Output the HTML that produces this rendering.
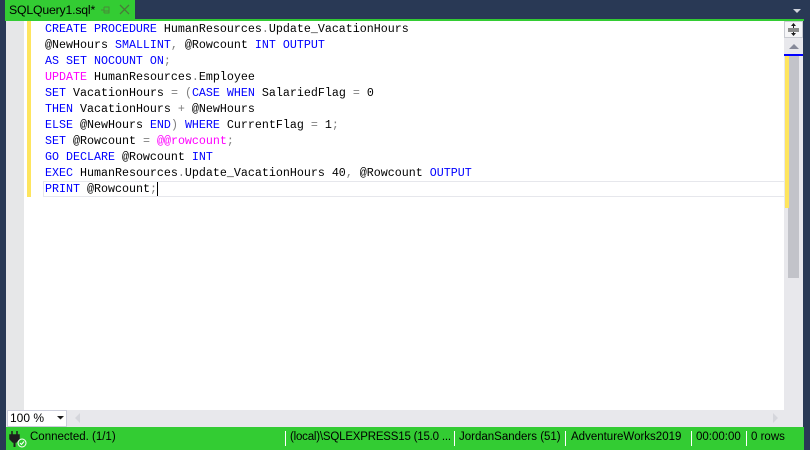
<!DOCTYPE html>
<html><head><style>
*{margin:0;padding:0;box-sizing:border-box}
body{width:810px;height:450px;background:#293955;position:relative;overflow:hidden;font-family:"Liberation Sans",sans-serif}
.abs{position:absolute}
.code{font-family:"Liberation Mono",monospace;font-size:11.67px;line-height:16px;white-space:pre;color:#000}
.k{color:#0000ff}.m{color:#ff00ff}.g{color:#808080}
.sb{font-size:11.5px;color:#000;top:431px;white-space:nowrap;overflow:hidden}
.sep{position:absolute;top:431px;width:1px;height:15px;background:#fff}
</style></head><body>
<div class="abs" style="left:5px;top:0;width:130px;height:21px;background:#33cc33"></div>
<div class="abs" style="left:9px;top:3px;font-size:12.3px;color:#000;letter-spacing:-0.2px">SQLQuery1.sql*</div>
<svg class="abs" style="left:101px;top:6px" width="10" height="9"><path d="M0 4H3M3 1V7M3 1H8V7H3M3 5H8" stroke="#4a8a3a" fill="none"/></svg>
<svg class="abs" style="left:119px;top:4px" width="11" height="11"><path d="M1 1L10 10M10 1L1 10" stroke="#4a7a3a" stroke-width="1.3"/></svg>
<div class="abs" style="left:6px;top:19px;width:798px;height:2px;background:#33cc33"></div>
<svg class="abs" style="left:793px;top:9px" width="8" height="5"><path d="M0 0H8L4 4Z" fill="#d0d4dc"/></svg>
<div class="abs" style="left:6px;top:21px;width:18px;height:389px;background:#e6e7e8"></div>
<div class="abs" style="left:24px;top:21px;width:760px;height:389px;background:#fff"></div>
<div class="abs" style="left:27px;top:21px;width:4px;height:176px;background:#fee55e"></div>
<div class="abs" style="left:43px;top:181px;width:741px;height:16px;border:1px solid #e6e7ec;border-right:none"></div>
<div class="abs code" style="left:45px;top:21px"><span class="k">CREATE PROCEDURE</span> HumanResources<span class="g">.</span>Update_VacationHours
@NewHours <span class="k">SMALLINT</span><span class="g">,</span> @Rowcount <span class="k">INT OUTPUT</span>
<span class="k">AS SET NOCOUNT ON</span><span class="g">;</span>
<span class="m">UPDATE</span> HumanResources<span class="g">.</span>Employee
<span class="k">SET</span> VacationHours <span class="g">=</span> <span class="g">(</span><span class="k">CASE WHEN</span> SalariedFlag <span class="g">=</span> 0
<span class="k">THEN</span> VacationHours <span class="g">+</span> @NewHours
<span class="k">ELSE</span> @NewHours <span class="k">END</span><span class="g">)</span> <span class="k">WHERE</span> CurrentFlag <span class="g">=</span> 1<span class="g">;</span>
<span class="k">SET</span> @Rowcount <span class="g">=</span> <span class="m">@@rowcount</span><span class="g">;</span>
<span class="k">GO DECLARE</span> @Rowcount <span class="k">INT</span>
<span class="k">EXEC</span> HumanResources<span class="g">.</span>Update_VacationHours 40<span class="g">,</span> @Rowcount <span class="k">OUTPUT</span>
<span class="k">PRINT</span> @Rowcount<span class="g">;</span></div>
<div class="abs" style="left:157px;top:182px;width:1px;height:14px;background:#000"></div>
<div class="abs" style="left:784px;top:21px;width:19px;height:406px;background:#e8e8ec"></div>
<div class="abs" style="left:784px;top:21px;width:19px;height:17px;background:#f5f5f7;border:1px solid #c9cbd2"></div>
<svg class="abs" style="left:786px;top:22px" width="15" height="15"><path d="M2 7H13M2 9H13" stroke="#1e1e1e"/><path d="M7.5 1L5 4H10ZM7.5 14L5 11H10Z" fill="#1e1e1e"/><path d="M7.5 3V6M7.5 10V12" stroke="#1e1e1e"/></svg>
<svg class="abs" style="left:788px;top:42px" width="12" height="8"><path d="M1 7H11L6 2Z" fill="#868999"/></svg>
<div class="abs" style="left:784px;top:54px;width:19px;height:2px;background:#0000ff"></div>
<div class="abs" style="left:788px;top:56px;width:11px;height:222px;background:#c2c3c9"></div>
<div class="abs" style="left:785px;top:56px;width:4px;height:152px;background:#fee55e"></div>
<div class="abs" style="left:6px;top:410px;width:778px;height:17px;background:#e8e8ec"></div>
<div class="abs" style="left:7px;top:410px;width:60px;height:17px;background:#fff;border:1px solid #cccedb"></div>
<div class="abs" style="left:10px;top:411px;font-size:12px;color:#000">100 %</div>
<svg class="abs" style="left:57px;top:416px" width="7" height="4"><path d="M0 0H7L3.5 3.5Z" fill="#1e1e1e"/></svg>
<svg class="abs" style="left:75px;top:413px" width="6" height="10"><path d="M5 0V10L0 5Z" fill="#d5d6dc"/></svg>
<svg class="abs" style="left:773px;top:413px" width="6" height="10"><path d="M0 0V10L5 5Z" fill="#d5d6dc"/></svg>
<div class="abs" style="left:6px;top:427px;width:798px;height:23px;background:#33cc33"></div>
<svg class="abs" style="left:9px;top:430px" width="18" height="18"><path d="M3 1V5M8 1V5M1 5H10V9L7 12H4L1 9Z" stroke="#1e1e1e" stroke-width="1.5" fill="#1e1e1e"/><path d="M5.5 12V17" stroke="#1e1e1e" stroke-width="2"/><circle cx="13" cy="13" r="4" fill="#33cc33" stroke="#fff"/><path d="M11 13L12.5 14.5L15 11.5" stroke="#fff" fill="none"/></svg>
<div class="abs sb" style="left:30px">Connected. (1/1)</div>
<div class="sep" style="left:285px"></div>
<div class="abs sb" style="left:290px;width:162px;letter-spacing:-0.2px">(local)\SQLEXPRESS15 (15.0 ...</div>
<div class="sep" style="left:454px"></div>
<div class="abs sb" style="left:459px;width:104px">JordanSanders (51)</div>
<div class="sep" style="left:565px"></div>
<div class="abs sb" style="left:571px;width:118px">AdventureWorks2019</div>
<div class="sep" style="left:691px"></div>
<div class="abs sb" style="left:696px">00:00:00</div>
<div class="sep" style="left:746px"></div>
<div class="abs sb" style="left:751px">0 rows</div>
</body></html>
